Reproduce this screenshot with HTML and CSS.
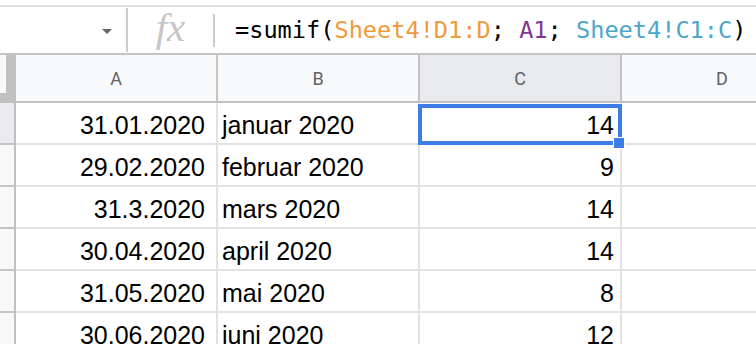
FILE: index.html
```html
<!DOCTYPE html>
<html lang="nb">
<head>
  <meta charset="UTF-8">
  <title>Sheets – sumif</title>
  <link rel="stylesheet" href="styles.css">
</head>
<body>
  <div class="formula-bar">
    <div class="name-box"><span class="caret"></span></div>
    <div class="fx">fx</div>
    <div class="divider"></div>
    <div class="formula">=sumif(<span class="ref-orange">Sheet4!D1:D</span>; <span class="ref-purple">A1</span>; <span class="ref-blue">Sheet4!C1:C</span>)</div>
  </div>

  <div class="grid">
    <div class="corner"><div class="corner-inner"></div></div>
    <div class="col-head">A</div>
    <div class="col-head">B</div>
    <div class="col-head selected">C</div>
    <div class="col-head">D</div>

    <div class="row-head selected"></div>
    <div class="cell date">31.01.2020</div>
    <div class="cell">januar 2020</div>
    <div class="cell num active">14<div class="selection"><span class="handle"></span></div></div>
    <div class="cell"></div>

    <div class="row-head"></div>
    <div class="cell date">29.02.2020</div>
    <div class="cell">februar 2020</div>
    <div class="cell num">9</div>
    <div class="cell"></div>

    <div class="row-head"></div>
    <div class="cell date">31.3.2020</div>
    <div class="cell">mars 2020</div>
    <div class="cell num">14</div>
    <div class="cell"></div>

    <div class="row-head"></div>
    <div class="cell date">30.04.2020</div>
    <div class="cell">april 2020</div>
    <div class="cell num">14</div>
    <div class="cell"></div>

    <div class="row-head"></div>
    <div class="cell date">31.05.2020</div>
    <div class="cell">mai 2020</div>
    <div class="cell num">8</div>
    <div class="cell"></div>

    <div class="row-head"></div>
    <div class="cell date">30.06.2020</div>
    <div class="cell">juni 2020</div>
    <div class="cell num">12</div>
    <div class="cell"></div>
  </div>
</body>
</html>
```

FILE: styles.css
```css
body {
  margin: 0;
  width: 756px;
  height: 344px;
  overflow: hidden;
  background: #fff;
  font-family: "Liberation Sans", Arial, sans-serif;
}

.formula-bar {
  display: flex;
  align-items: center;
  margin-top: 5px;
  height: 46px;
  border-top: 2px solid #e0e0e0;
  border-bottom: 2px solid #c4c4c4;
}
.name-box {
  width: 128px;
  height: 44px;
  display: flex;
  align-items: center;
  justify-content: flex-end;
  padding-right: 14px;
  box-sizing: border-box;
  border-right: 2px solid #cccccc;
}
.caret {
  width: 0;
  height: 0;
  border-left: 5px solid transparent;
  border-right: 5px solid transparent;
  border-top: 5px solid #666;
  margin-top: 2px;
}
.fx {
  width: 85px;
  text-align: center;
  font-family: "Liberation Serif", "Times New Roman", serif;
  font-style: italic;
  font-size: 41px;
  color: #c6c6c6;
  line-height: 1;
  margin-top: -6px;
}
.divider {
  width: 2px;
  height: 33px;
  background: #cccccc;
}
.formula {
  padding-left: 20px;
  font-family: "DejaVu Sans Mono", "Liberation Mono", monospace;
  font-size: 23.6px;
  color: #000;
  white-space: nowrap;
}
.ref-orange { color: #f09a3b; }
.ref-purple { color: #7e3794; }
.ref-blue { color: #4ba6c9; }

.grid {
  display: grid;
  grid-template-columns: 16px 202px 202px 202px 202px;
  grid-template-rows: 48px repeat(6, 42px);
}
.corner {
  background: #c0c0c0;
  border-bottom: 2px solid #c0c0c0;
}
.corner-inner {
  width: 6px;
  height: 38px;
  background: #f8f9fa;
}
.col-head {
  display: flex;
  align-items: center;
  justify-content: center;
  background: #f8f9fa;
  border-right: 2px solid #c4c4c4;
  border-bottom: 2px solid #c0c0c0;
  font-family: Roboto, "Liberation Sans", sans-serif;
  font-size: 18px;
  color: #5f6368;
}
.col-head.selected { background: #e8eaed; }

.row-head {
  background: #f8f9fa;
  border-right: 2px solid #c0c0c0;
  border-bottom: 2px solid #c4c4c4;
}
.row-head.selected { background: #e8eaed; }

.cell {
  position: relative;
  display: flex;
  align-items: flex-end;
  padding: 0 4px 3px;
  border-right: 2px solid #e2e2e2;
  border-bottom: 2px solid #e2e2e2;
  font-size: 25px;
  color: #000;
  white-space: nowrap;
}
.cell.date {
  justify-content: flex-end;
  padding-right: 11px;
}
.cell.num {
  justify-content: flex-end;
  padding-right: 6px;
}
.cell.active { z-index: 2; }

.selection {
  position: absolute;
  top: 1px;
  left: -2px;
  right: -2px;
  bottom: -2px;
  border: 4px solid #3d7de6;
}
.handle {
  position: absolute;
  right: -7px;
  bottom: -8px;
  width: 10px;
  height: 10px;
  background: #3d7de6;
  border: 1px solid #fff;
}
```
